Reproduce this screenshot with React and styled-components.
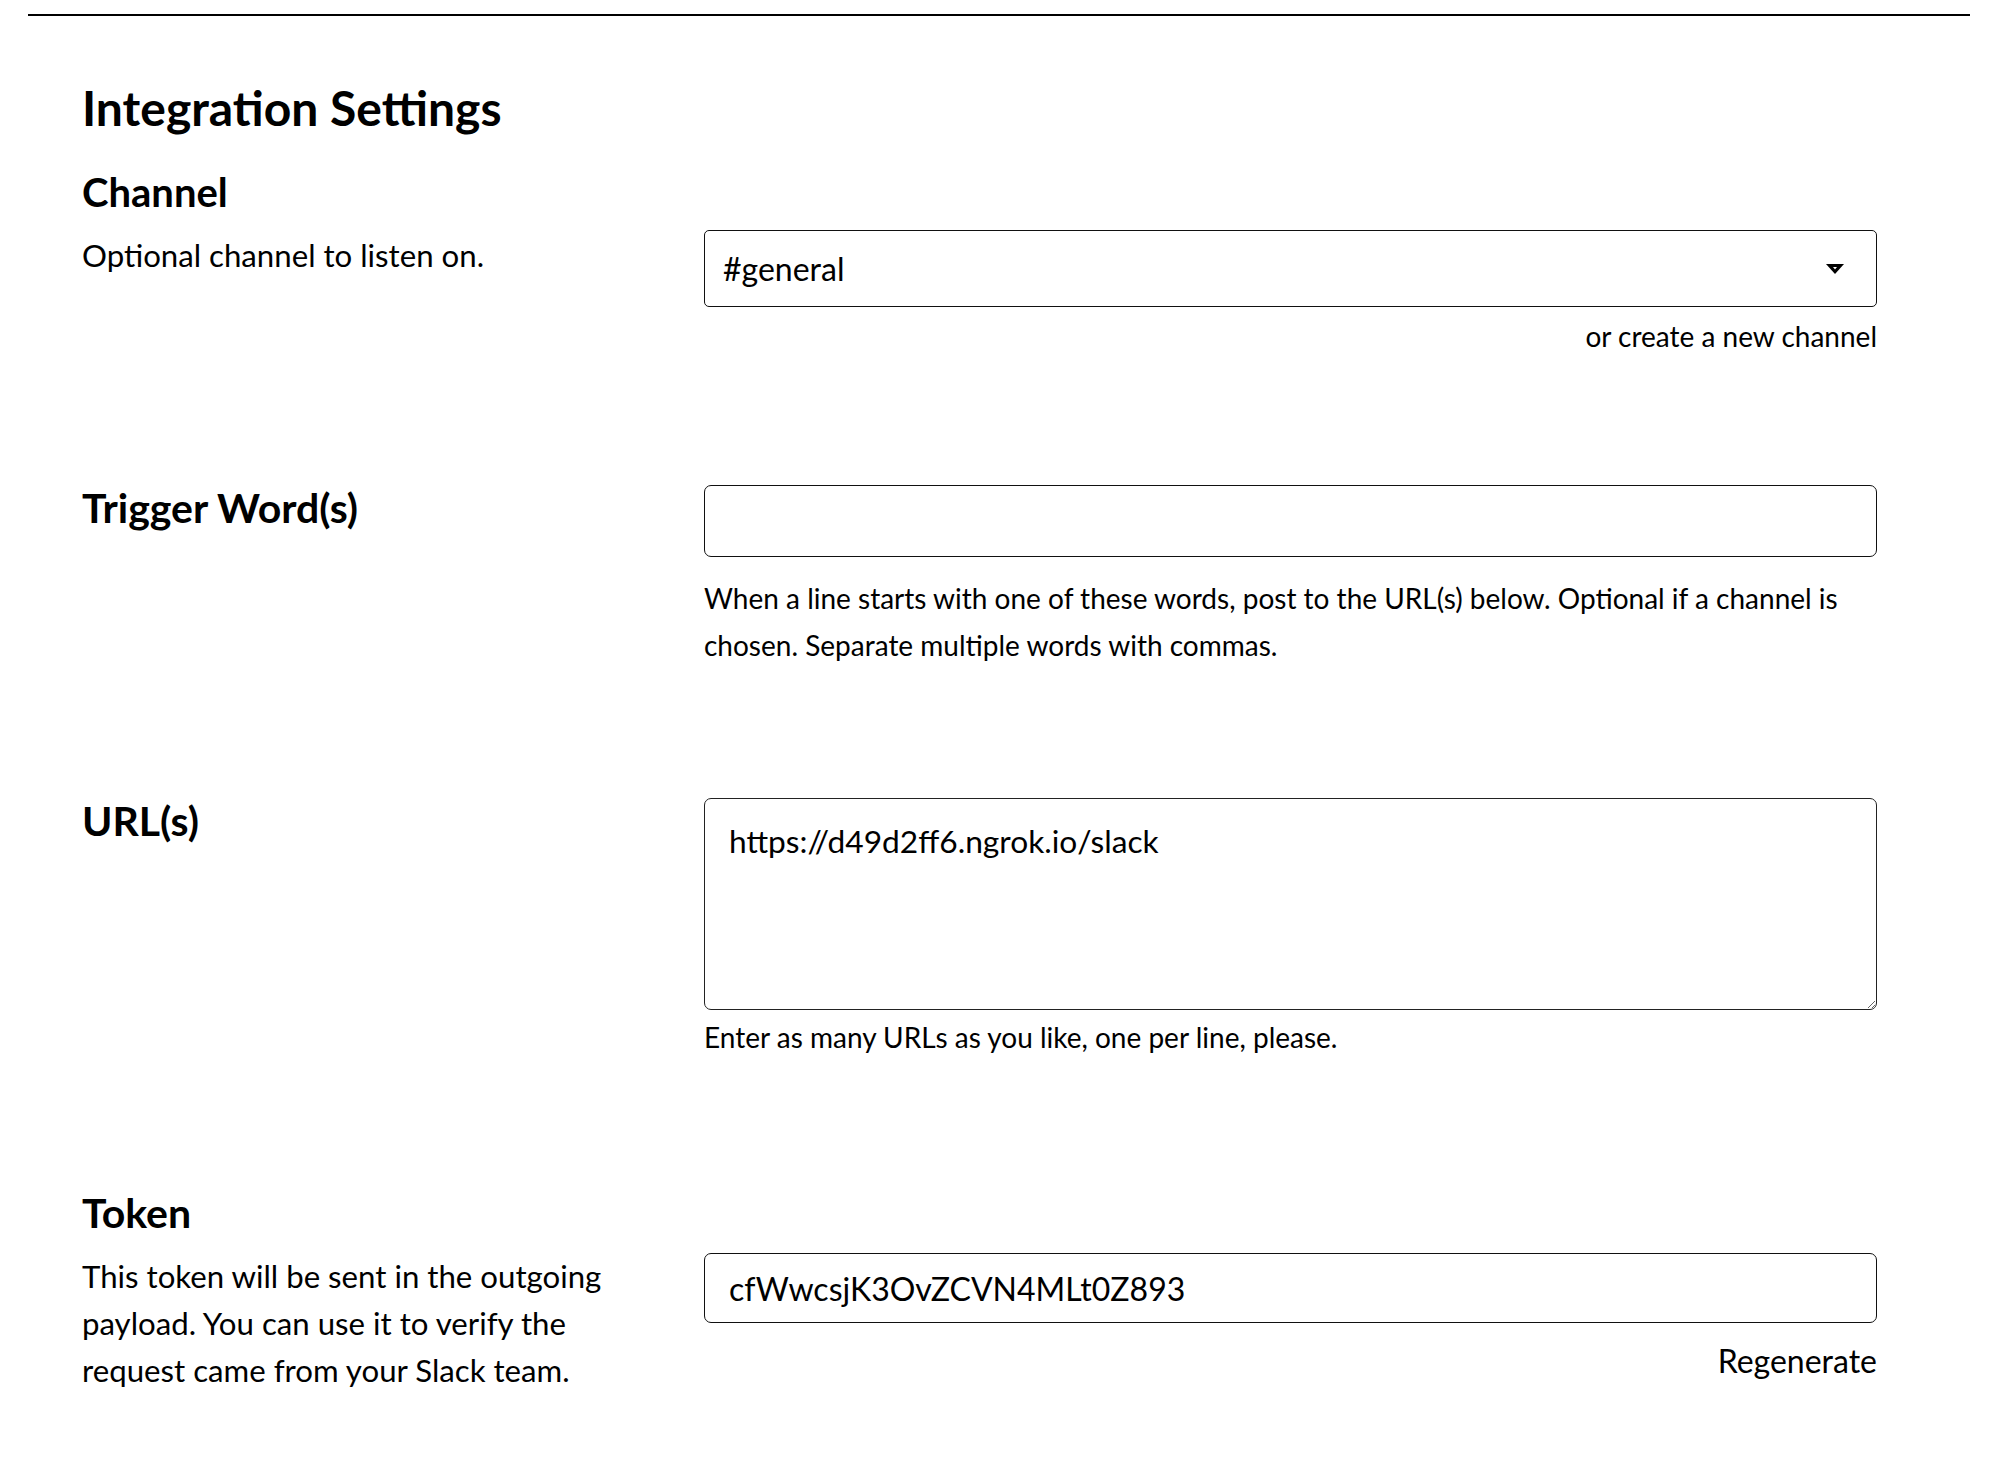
import React from 'react';
import styled, { createGlobalStyle } from 'styled-components';

const GlobalStyle = createGlobalStyle`
    html, body {
        margin: 0;
        padding: 0;
        background: #fff;
    }
    body {
        font-family: Lato, "Liberation Sans", sans-serif;
        color: #000;
    }
    * {
        box-sizing: border-box;
    }
`;

const StyledPage = styled.div`
    width: 1999px;
    padding-bottom: 80px;
`;

const StyledRule = styled.div`
    height: 2px;
    margin: 14px 29px 0 28px;
    background-color: #000;
`;

const StyledContent = styled.div`
    width: 1877px;
    padding-left: 82px;
    display: flex;
    flex-direction: column;
`;

const StyledTitle = styled.h1`
    margin: 64px 0 33px;
    font-size: 48px;
    line-height: 56px;
    font-weight: 700;
`;

const StyledSections = styled.div`
    display: flex;
    flex-direction: column;
    gap: 129px;
`;

const StyledSection = styled.section`
    display: flex;
    flex-direction: column;
    gap: 17px;
`;

const StyledHeading = styled.h3`
    margin: 0;
    font-size: ${(props) => props.$size || 41}px;
    line-height: 46px;
    font-weight: 700;
`;

const StyledRow = styled.div`
    display: grid;
    grid-template-columns: 622px 1fr;
    align-items: start;
`;

const StyledDescription = styled.p`
    margin: 0;
    max-width: 560px;
    font-size: 31.2px;
    line-height: 47px;
`;

const StyledField = styled.div`
    display: flex;
    flex-direction: column;
`;

const StyledSelectWrap = styled.div`
    position: relative;
    margin-top: -2px;
`;

const StyledSelect = styled.select`
    appearance: none;
    width: 100%;
    height: 77px;
    padding: 0 60px 0 18px;
    border: 1px solid #111;
    border-radius: 5px;
    background: #fff;
    color: #000;
    font-family: inherit;
    font-size: 32px;
`;

const StyledArrow = styled.svg`
    position: absolute;
    right: 33px;
    top: 34px;
    pointer-events: none;
`;

const StyledInput = styled.input`
    width: 100%;
    height: ${(props) => props.$height || 72}px;
    padding: 0 24px;
    border: 1px solid #111;
    border-radius: 7px;
    background: #fff;
    color: #000;
    font-family: inherit;
    font-size: 32px;
    outline: none;
`;

const StyledTextArea = styled.textarea`
    display: block;
    width: 100%;
    height: 212px;
    padding: 19px 24px;
    border: 1px solid #222;
    border-radius: 7px;
    background: #fff;
    color: #000;
    font-family: inherit;
    font-size: 31.7px;
    line-height: 47px;
    outline: none;
    resize: vertical;
`;

const StyledHelp = styled.p`
    margin: ${(props) => props.$gap || 0}px 0 0;
    font-size: 28px;
    line-height: 47px;
`;

const StyledAside = styled.div`
    margin-top: ${(props) => props.$gap || 0}px;
    text-align: right;
    font-size: ${(props) => props.$size || 28}px;
    line-height: ${(props) => props.$lineHeight || 40}px;
`;

const Arrow = () => (
    <StyledArrow width="18" height="10" viewBox="0 0 18 10">
        <path d="M0 0 H18 L9 10 Z" fill="#000" />
        <path d="M7 3 H11 L9 5.5 Z" fill="#fff" />
    </StyledArrow>
);

const App = () => {
    return (
        <StyledPage>
            <GlobalStyle />
            <StyledRule />
            <StyledContent>
                <StyledTitle>Integration Settings</StyledTitle>
                <StyledSections>
                    <StyledSection>
                        <StyledHeading $size={40}>Channel</StyledHeading>
                        <StyledRow>
                            <StyledDescription>Optional channel to listen on.</StyledDescription>
                            <StyledField>
                                <StyledSelectWrap>
                                    <StyledSelect defaultValue="general">
                                        <option value="general">#general</option>
                                        <option value="random">#random</option>
                                    </StyledSelect>
                                    <Arrow />
                                </StyledSelectWrap>
                                <StyledAside $gap={9}>or create a new channel</StyledAside>
                            </StyledField>
                        </StyledRow>
                    </StyledSection>

                    <StyledRow>
                        <StyledHeading>Trigger Word(s)</StyledHeading>
                        <StyledField>
                            <StyledInput type="text" defaultValue="" />
                            <StyledHelp $gap={18}>
                                When a line starts with one of these words, post to the URL(s) below. Optional if a channel is chosen. Separate multiple words with commas.
                            </StyledHelp>
                        </StyledField>
                    </StyledRow>

                    <StyledRow>
                        <StyledHeading>URL(s)</StyledHeading>
                        <StyledField>
                            <StyledTextArea defaultValue="https://d49d2ff6.ngrok.io/slack" />
                            <StyledHelp $gap={4}>
                                Enter as many URLs as you like, one per line, please.
                            </StyledHelp>
                        </StyledField>
                    </StyledRow>

                    <StyledSection>
                        <StyledHeading>Token</StyledHeading>
                        <StyledRow>
                            <StyledDescription>
                                This token will be sent in the outgoing payload. You can use it to verify the request came from your Slack team.
                            </StyledDescription>
                            <StyledField>
                                <StyledInput type="text" $height={70} defaultValue="cfWwcsjK3OvZCVN4MLt0Z893" />
                                <StyledAside $gap={14} $size={32} $lineHeight={47}>Regenerate</StyledAside>
                            </StyledField>
                        </StyledRow>
                    </StyledSection>
                </StyledSections>
            </StyledContent>
        </StyledPage>
    );
};

export default App;
